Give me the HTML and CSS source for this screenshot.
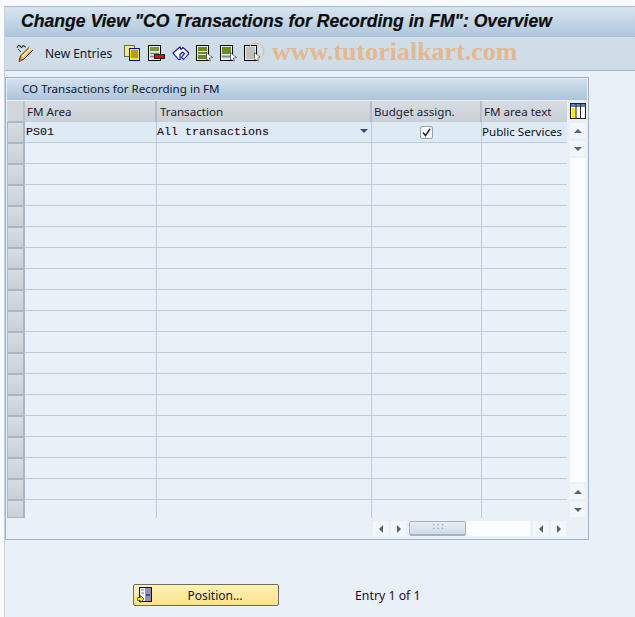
FILE: index.html
```html
<!DOCTYPE html>
<html lang="en">
<head>
<meta charset="utf-8">
<title>Change View</title>
<link rel="stylesheet" href="styles.css">
</head>
<body>
<div class="window">
  <header class="titlebar"><h1>Change View "CO Transactions for Recording in FM": Overview</h1></header>
  <nav class="toolbar">
    <svg class="ico pencil" width="18" height="20" viewBox="0 0 18 20"><path d="M1 5c1-3 2-3 3-2s1 2 2 1 1-2 2-1 1 1 2 1" fill="none" stroke="#333" stroke-width="1.100"/><path d="M2 6l3 3" stroke="#333"/><path d="M3 18.500l1.500-5.500 9-9 3.500 3-9 9z" fill="#f5b43a" stroke="#222"/><path d="M5.500 13l8-8 1.500 1.500-8 8z" fill="#fbe6a0"/><path d="M13 4.500l1-1 3 3-1 1z" fill="#e8e8e8"/><path d="M3 18.500l1-3 2.500 2z" fill="#e2541c"/></svg>
    <span class="tool-label">New Entries</span>
    <div class="tool-icons">
      <svg class="ti" width="16" height="16" viewBox="0 0 16 16"><rect x=".5" y=".5" width="10" height="11" fill="#f7ee6a" stroke="#666"/><rect x="5.500" y="3.500" width="10" height="12" fill="#ffe900" stroke="#0000c8"/><path d="M7 6h7M7 8h7M7 10h7M7 12h7" stroke="#555"/></svg>
      <svg class="ti" width="18" height="16" viewBox="0 0 18 16"><rect x=".5" y=".5" width="12" height="15" fill="#e4ebe4" stroke="#000"/><path d="M2 2h9v4H2z" fill="#7c9a28"/><path d="M2 8.500h9M2 11.500h4" stroke="#6f8fa8" stroke-width="1.500"/><rect x="6.500" y="9.500" width="10" height="4" fill="#e8000c" stroke="#222"/></svg>
      <svg class="ti" width="18" height="16" viewBox="0 0 18 16"><path d="M1 8L8 2l1 2.500L11 2.500 16.500 7.500v1.500L11.500 14.500 9.500 12.500 12.500 8.500 10.500 7 8 9.500V14.500H6.500z" fill="#fff" stroke="#1010a8" stroke-width="1.100"/></svg>
      <svg class="ti" width="18" height="17" viewBox="0 0 18 17"><rect x=".5" y=".5" width="12" height="15" fill="#e4ebe4" stroke="#000"/><path d="M2 2h9v4H2zM2 7h9v2H2zM2 10h9v4H2z" fill="#6f8a1e"/><path d="M10.500 7.500l6 5-3 .5 .8 3-3.800-1.500z" fill="#fff" stroke="#222" stroke-width=".6"/></svg>
      <svg class="ti" width="18" height="17" viewBox="0 0 18 17"><rect x=".5" y=".5" width="12" height="15" fill="#e4ebe4" stroke="#000"/><path d="M2 2h9v7H2z" fill="#6f8a1e"/><path d="M2 11.500h9" stroke="#6f8fa8" stroke-width="2"/><path d="M10.500 7.500l6 5-3 .5 .8 3-3.800-1.500z" fill="#fff" stroke="#222" stroke-width=".6"/></svg>
      <svg class="ti" width="18" height="17" viewBox="0 0 18 17"><rect x=".5" y=".5" width="12" height="15" fill="#e8ecec" stroke="#000"/><path d="M2 3h9M2 5h9M2 7h9M2 9h9M2 11h9M2 13h9" stroke="#8a9aa6"/><path d="M10.500 7.500l6 5-3 .5 .8 3-3.800-1.500z" fill="#fff" stroke="#222" stroke-width=".6"/></svg>
    </div>
    <svg class="wm-circle" width="18" height="18" viewBox="0 0 18 18"><circle cx="9" cy="9" r="8" fill="none" stroke="#e8b88a" stroke-width="1"/></svg>
    <span class="watermark">www.tutorialkart.com</span>
  </nav>

  <main class="content">
    <section class="panel">
      <h2 class="panel-title">CO Transactions for Recording in FM</h2>
      <div class="table-area">
        <div class="table">
          <div class="row head">
            <div class="sel"></div>
            <div class="cell">FM Area</div>
            <div class="cell">Transaction</div>
            <div class="cell">Budget assign.</div>
            <div class="cell">FM area text</div>
          </div>
          <div class="row first">
            <div class="sel"></div>
            <div class="cell mono">PS01</div>
            <div class="cell mono dd">All transactions<span class="dd-arrow"></span></div>
            <div class="cell center"><span class="check"><svg width="9" height="9" viewBox="0 0 9 9"><path d="M1 4.500l2.500 3L8 1" fill="none" stroke="#222" stroke-width="1.400"/></svg></span></div>
            <div class="cell text">Public Services</div>
          </div>
          <div class="row"><div class="sel"></div><div class="cell"></div><div class="cell"></div><div class="cell"></div><div class="cell"></div></div>
          <div class="row"><div class="sel"></div><div class="cell"></div><div class="cell"></div><div class="cell"></div><div class="cell"></div></div>
          <div class="row"><div class="sel"></div><div class="cell"></div><div class="cell"></div><div class="cell"></div><div class="cell"></div></div>
          <div class="row"><div class="sel"></div><div class="cell"></div><div class="cell"></div><div class="cell"></div><div class="cell"></div></div>
          <div class="row"><div class="sel"></div><div class="cell"></div><div class="cell"></div><div class="cell"></div><div class="cell"></div></div>
          <div class="row"><div class="sel"></div><div class="cell"></div><div class="cell"></div><div class="cell"></div><div class="cell"></div></div>
          <div class="row"><div class="sel"></div><div class="cell"></div><div class="cell"></div><div class="cell"></div><div class="cell"></div></div>
          <div class="row"><div class="sel"></div><div class="cell"></div><div class="cell"></div><div class="cell"></div><div class="cell"></div></div>
          <div class="row"><div class="sel"></div><div class="cell"></div><div class="cell"></div><div class="cell"></div><div class="cell"></div></div>
          <div class="row"><div class="sel"></div><div class="cell"></div><div class="cell"></div><div class="cell"></div><div class="cell"></div></div>
          <div class="row"><div class="sel"></div><div class="cell"></div><div class="cell"></div><div class="cell"></div><div class="cell"></div></div>
          <div class="row"><div class="sel"></div><div class="cell"></div><div class="cell"></div><div class="cell"></div><div class="cell"></div></div>
          <div class="row"><div class="sel"></div><div class="cell"></div><div class="cell"></div><div class="cell"></div><div class="cell"></div></div>
          <div class="row"><div class="sel"></div><div class="cell"></div><div class="cell"></div><div class="cell"></div><div class="cell"></div></div>
          <div class="row"><div class="sel"></div><div class="cell"></div><div class="cell"></div><div class="cell"></div><div class="cell"></div></div>
          <div class="row"><div class="sel"></div><div class="cell"></div><div class="cell"></div><div class="cell"></div><div class="cell"></div></div>
          <div class="row"><div class="sel"></div><div class="cell"></div><div class="cell"></div><div class="cell"></div><div class="cell"></div></div>
          <div class="row last"><div class="sel"></div><div class="cell"></div><div class="cell"></div><div class="cell"></div><div class="cell"></div></div>
        </div>
        <div class="vside">
          <div class="settings"><svg width="16" height="16" viewBox="0 0 16 16"><rect x=".5" y=".5" width="15" height="15" fill="#fff" stroke="#222"/><rect x="1" y="1" width="14" height="3" fill="#5b7fb8"/><rect x="2" y="5" width="3.500" height="10" fill="#ffe900"/><path d="M6 1v14M10.500 1v14" stroke="#222"/></svg></div>
          <div class="vscroll">
            <div class="sbtn"><i class="arr up"></i></div>
            <div class="sbtn"><i class="arr down"></i></div>
            <div class="track"></div>
            <div class="sbtn"><i class="arr up"></i></div>
            <div class="sbtn"><i class="arr down"></i></div>
          </div>
        </div>
      </div>
      <div class="hscroll">
        <div class="sbtn"><i class="arr left"></i></div>
        <div class="sbtn"><i class="arr right"></i></div>
        <div class="htrack"><div class="thumb"><span class="grip">:::</span></div></div>
        <div class="sbtn"><i class="arr left"></i></div>
        <div class="sbtn"><i class="arr right"></i></div>
      </div>
    </section>

    <footer class="footer">
      <button class="btn" type="button">
        <svg width="15" height="16" viewBox="0 0 15 16"><rect x="2.500" y=".5" width="12" height="14" fill="#fff" stroke="#111"/><rect x="8" y="1" width="6" height="13" fill="#8f8fc4"/><path d="M9 8h4" stroke="#111"/><path d="M4 3h3M4 6h3" stroke="#777"/><path d="M.5 10.500h3v-2l3.500 3.500-3.500 3.500v-2h-3z" fill="#ffe900" stroke="#333" stroke-width=".7"/></svg>
        <span class="btn-label">Position...</span>
      </button>
      <span class="entry">Entry 1 of 1</span>
    </footer>
  </main>
</div>
</body>
</html>
```

FILE: styles.css
```css
* { box-sizing: border-box; }
html, body { margin: 0; padding: 0; }
body {
  width: 635px;
  height: 617px;
  overflow: hidden;
  background: #f8fafd;
  font-family: "Noto Sans", "Open Sans", sans-serif;
  font-size: 11.6px;
  color: #111;
}
.window {
  margin: 6px 0 0 4px;
  height: 611px;
  background: #e9f0f7;
  border-top: 1px solid #a6bccf;
  border-left: 1px solid #c4d2de;
}
.titlebar {
  height: 30px;
  background: linear-gradient(#d8e5f0, #adc5db);
  padding: 3px 0 0 16px;
}
.titlebar h1 {
  margin: 0;
  font: italic bold 17.6px/22px "Liberation Sans", sans-serif;
  color: #0c0c0c;
  white-space: nowrap;
  -webkit-text-stroke: .2px #0c0c0c;
}
.toolbar {
  position: relative;
  height: 34px;
  background: #cfdde8;
  border-bottom: 1px solid #a3b7c9;
  display: flex;
  align-items: center;
  padding: 0 0 1px 11px;
}
.ico.pencil { flex: none; }
.tool-label { margin-left: 11px; color: #10182c; font-size: 12px; }
.tool-icons { display: flex; align-items: center; margin-left: 12px; }
.ti { display: block; flex: none; margin-right: 6px; }
.ti:nth-child(1) { margin-right: 8px; }
.wm-circle { position: absolute; left: 242px; top: 5px; }
.watermark {
  position: absolute;
  left: 267px;
  top: 0;
  font: bold 26px/30px "Liberation Serif", serif;
  color: #e6b88d;
  white-space: nowrap;
}
.content { padding: 6px 0 0 0; }
.panel {
  width: 584px;
  height: 463px;
  border: 1px solid #9bb3cb;
  padding: 1px 1px 0 1px;
  background: #e9f0f7;
}
.panel-title {
  margin: 0;
  height: 21px;
  padding-left: 15px;
  font: 400 11.6px/19px "Noto Sans", sans-serif;
  color: #10182c;
  background: linear-gradient(#d3e1ed, #adc4da);
}
.table-area { display: flex; margin-top: 1px; }
.table { width: 560px; flex: none; }
.row {
  display: grid;
  grid-template-columns: 18px 132px 215px 110px 85px;
  height: 21px;
}
.sel {
  background: linear-gradient(#d8dde3, #c9cfd6);
  border-style: solid;
  border-width: 1px 2px 1px 1px;
  border-color: #a9b6c4;
}
.cell {
  border-right: 1px solid #c0cad5;
  border-bottom: 1px solid #bfcad6;
  padding-left: 2px;
  line-height: 19px;
  white-space: nowrap;
  position: relative;
  color: #111;
}
.cell:last-child { border-right: 0; }
.head .sel { border: 0; background: #d0d6dc; border-right: 2px solid #b7c2cd; border-bottom: 2px solid #aeb9c5; }
.head .cell {
  background: linear-gradient(#d8dde3, #c9cfd6);
  border-right: 2px solid #b3bec9;
  border-bottom: 1px solid #bfcad6;
  padding-left: 2px;
  line-height: 21px;
  color: #1a2233;
}
.head .cell:nth-child(3) { padding-left: 3px; }
.head .cell:last-child { border-right: 0; }
.first .cell { background: #deeaf4; }
.mono { font: 11.67px/20px "Liberation Mono", monospace; color: #200818; padding-left: 0; -webkit-text-stroke: .1px #200818; }
.row .mono:nth-child(2) { padding-left: 1px; }
.dd-arrow {
  position: absolute;
  right: 3px;
  top: 7px;
  width: 0;
  height: 0;
  border: 4px solid transparent;
  border-top: 4px solid #34506e;
  border-bottom: 0;
}
.center { display: flex; justify-content: center; align-items: center; padding: 0; }
.check {
  width: 13px;
  height: 13px;
  background: #f4f6f8;
  border: 1px solid #9aa3ad;
  border-radius: 2px;
  display: flex;
  align-items: center;
  justify-content: center;
}
.check svg { display: block; }
.text { padding-left: 0; overflow: hidden; line-height: 20px; }
.last { height: 18px; }
.last .cell { border-bottom: 0; }
.vside { width: 18px; margin-left: 3px; flex: none; display: flex; flex-direction: column; }
.settings { height: 21px; padding: 2px 0 0 0; }
.settings svg { display: block; }
.vscroll { display: flex; flex-direction: column; gap: 3px; width: 16px; padding-top: 1px; }
.track { height: 324px; background: #fbfcfd; margin: -1px 0; flex: none; }
.sbtn {
  width: 15px;
  height: 15px;
  background: #f3f6fa;
  display: flex;
  align-items: center;
  justify-content: center;
  flex: none;
}
.arr { display: block; width: 0; height: 0; border: 4px solid transparent; }
.arr.up { border-bottom: 4px solid #4f6679; border-top: 0; }
.arr.down { border-top: 4px solid #4f6679; border-bottom: 0; }
.arr.left { border-right: 4px solid #4f6679; border-left: 0; }
.arr.right { border-left: 4px solid #4f6679; border-right: 0; }
.hscroll { display: flex; gap: 3px; margin: 3px 0 0 366px; }
.htrack { width: 122px; height: 15px; background: #fbfcfd; padding-left: 1px; flex: none; margin-left: -1px; }
.thumb {
  width: 57px;
  height: 15px;
  background: linear-gradient(#e8eff5, #ccdbe7);
  border: 1px solid #a9b2bc;
  border-bottom-width: 2px;
  border-radius: 2px;
  text-align: center;
  font: 9px/11px "Liberation Mono", monospace;
  color: #8a99a8;
}
.grip { letter-spacing: -1px; }
.footer { display: flex; align-items: center; padding: 44px 0 0 128px; }
.btn {
  width: 146px;
  height: 22px;
  padding: 0 0 0 3px;
  background: linear-gradient(#fff3b4, #fce08c);
  border: 1px solid #6e6e66;
  border-radius: 2px;
  display: flex;
  align-items: center;
  font: 12px "Noto Sans", sans-serif;
  color: #10182c;
}
.btn svg { display: block; flex: none; }
.btn-label { flex: 1; text-align: center; }
.entry { margin-left: 76px; color: #18102c; font-size: 12.3px; }
```
